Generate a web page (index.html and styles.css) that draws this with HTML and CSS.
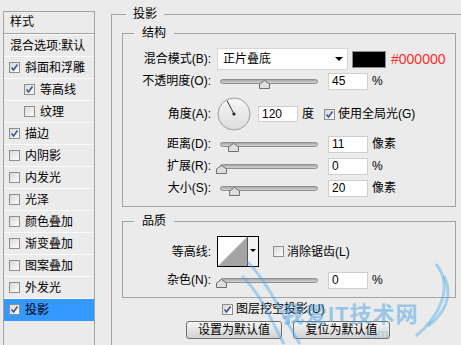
FILE: index.html
```html
<!DOCTYPE html>
<html lang="zh-CN">
<head>
  <meta charset="UTF-8">
  <title>图层样式 - 投影</title>
  <link rel="stylesheet" href="styles.css">
</head>
<body>

<div class="styles-panel">
  <div class="panel-head">样式</div>
  <div class="panel-item plain">混合选项:默认</div>
  <div class="panel-item"><span class="check"><svg width="9" height="9"><path d="M1.5 4.5 L3.5 7 L7.5 1.5" /></svg></span>斜面和浮雕</div>
  <div class="panel-item sub"><span class="check"><svg width="9" height="9"><path d="M1.5 4.5 L3.5 7 L7.5 1.5" /></svg></span>等高线</div>
  <div class="panel-item sub"><span class="check"></span>纹理</div>
  <div class="panel-item"><span class="check"><svg width="9" height="9"><path d="M1.5 4.5 L3.5 7 L7.5 1.5" /></svg></span>描边</div>
  <div class="panel-item"><span class="check"></span>内阴影</div>
  <div class="panel-item"><span class="check"></span>内发光</div>
  <div class="panel-item"><span class="check"></span>光泽</div>
  <div class="panel-item"><span class="check"></span>颜色叠加</div>
  <div class="panel-item"><span class="check"></span>渐变叠加</div>
  <div class="panel-item"><span class="check"></span>图案叠加</div>
  <div class="panel-item"><span class="check"></span>外发光</div>
  <div class="panel-item selected"><span class="check"><svg width="9" height="9"><path d="M1.5 4.5 L3.5 7 L7.5 1.5" /></svg></span>投影</div>
</div>

<fieldset class="group outer">
  <legend>投影</legend>

  <fieldset class="group structure">
    <legend>结构</legend>
    <div class="row">
      <span class="lbl">混合模式(B):</span>
      <div class="select">正片叠底<span class="caret"></span></div>
      <span class="swatch"></span>
      <span class="hex">#000000</span>
    </div>
    <div class="row">
      <span class="lbl">不透明度(O):</span>
      <div class="slider"><svg class="thumb" style="left: 45%" width="11" height="9"><polygon points="0.5,8.5 0.5,4 5.5,0.5 10.5,4 10.5,8.5" /></svg></div>
      <span class="num">45</span>
      <span class="unit">%</span>
    </div>
    <div class="row angle-row">
      <span class="lbl">角度(A):</span>
      <svg class="dial" width="34" height="34">
        <defs>
          <linearGradient id="dialFill" x1="0" y1="0" x2="0" y2="1">
            <stop offset="0" stop-color="#f6f6f6" />
            <stop offset="1" stop-color="#dcdcdc" />
          </linearGradient>
        </defs>
        <circle cx="17" cy="17" r="16" fill="url(#dialFill)" stroke="#9c9c9c" />
        <line x1="17" y1="17" x2="10" y2="3.5" stroke="#333" stroke-width="1" />
        <circle cx="17" cy="17" r="1.6" fill="#222" />
      </svg>
      <span class="num angle">120</span>
      <span class="unit">度</span>
      <span class="check global"><svg width="9" height="9"><path d="M1.5 4.5 L3.5 7 L7.5 1.5" /></svg></span>
      <span class="check-text">使用全局光(G)</span>
    </div>
    <div class="row tight">
      <span class="lbl">距离(D):</span>
      <div class="slider"><svg class="thumb" style="left: 12%" width="11" height="9"><polygon points="0.5,8.5 0.5,4 5.5,0.5 10.5,4 10.5,8.5" /></svg></div>
      <span class="num">11</span>
      <span class="unit">像素</span>
    </div>
    <div class="row">
      <span class="lbl">扩展(R):</span>
      <div class="slider"><svg class="thumb" style="left: 0%" width="11" height="9"><polygon points="0.5,8.5 0.5,4 5.5,0.5 10.5,4 10.5,8.5" /></svg></div>
      <span class="num">0</span>
      <span class="unit">%</span>
    </div>
    <div class="row">
      <span class="lbl">大小(S):</span>
      <div class="slider"><svg class="thumb" style="left: 14%" width="11" height="9"><polygon points="0.5,8.5 0.5,4 5.5,0.5 10.5,4 10.5,8.5" /></svg></div>
      <span class="num">20</span>
      <span class="unit">像素</span>
    </div>
  </fieldset>

  <fieldset class="group quality">
    <legend>品质</legend>
    <div class="row contour-row">
      <span class="lbl">等高线:</span>
      <div class="contour">
        <svg width="29" height="29"><polygon points="0,29 29,0 29,29" fill="#a4a4a4" /></svg>
        <div class="contour-drop"><span class="caret small"></span></div>
      </div>
      <span class="check aa"></span>
      <span class="check-text">消除锯齿(L)</span>
    </div>
    <div class="row tight">
      <span class="lbl">杂色(N):</span>
      <div class="slider"><svg class="thumb" style="left: 0%" width="11" height="9"><polygon points="0.5,8.5 0.5,4 5.5,0.5 10.5,4 10.5,8.5" /></svg></div>
      <span class="num">0</span>
      <span class="unit">%</span>
    </div>
  </fieldset>

  <div class="knockout"><span class="check"><svg width="9" height="9"><path d="M1.5 4.5 L3.5 7 L7.5 1.5" /></svg></span>图层挖空投影(U)</div>
  <div class="buttons">
    <button class="btn">设置为默认值</button>
    <button class="btn">复位为默认值</button>
  </div>
</fieldset>

<!-- site watermark over the dialog -->
<div class="watermark">
  <svg class="swoosh" width="220" height="90">
    <path d="M8 6 C 30 30, 40 55, 60 88" />
    <path d="M2 20 C 22 40, 30 62, 44 88" />
    <path d="M196 8 C 214 30, 200 60, 176 80" />
    <path d="M204 20 C 214 40, 204 58, 188 70" />
  </svg>
  <span class="wm-text">我爱IT技术网</span>
  <span class="wm-sub">.com</span>
</div>

</body>
</html>
```

FILE: styles.css
```css
body {
  margin: 0;
  width: 461px;
  height: 345px;
  overflow: hidden;
  position: relative;
  display: flex;
  align-items: flex-start;
  background: #ebebeb;
  font-family: "Liberation Sans", "Noto Sans CJK SC", sans-serif;
  font-size: 12px;
  line-height: 16px;
  color: #000;
}

/* left list of styles */
.styles-panel {
  flex-shrink: 0;
  margin: 11px 0 0 3px;
  width: 92px;
  height: 334px;
  box-sizing: border-box;
  border: 1px solid #a3a3a3;
  border-bottom: none;
}
.panel-head {
  height: 21px;
  line-height: 21px;
  padding-left: 6px;
  border-bottom: 1px solid #a3a3a3;
  margin-bottom: 1px;
  box-shadow: 0 1px 0 #fafafa;
}
.panel-item {
  display: flex;
  align-items: center;
  gap: 5px;
  height: 21px;
  padding-left: 5px;
  border-bottom: 1px solid #fafafa;
  white-space: nowrap;
}
.panel-item.plain {
  padding-left: 6px;
}
.panel-item.sub {
  padding-left: 20px;
}
.panel-item.selected {
  background: #3399ff;
  border-bottom-color: #3399ff;
}

.check {
  flex-shrink: 0;
  display: inline-flex;
  align-items: center;
  justify-content: center;
  width: 11px;
  height: 11px;
  box-sizing: border-box;
  border: 1px solid #8e8e8e;
  background: linear-gradient(135deg, #d8d8d8, #fdfdfd);
}
.check svg {
  display: block;
}
.check path {
  fill: none;
  stroke: #3f5199;
  stroke-width: 1.6;
}

/* right side groups */
.group {
  margin: 0;
  padding: 0;
  border: 1px solid #a3a3a3;
  box-sizing: border-box;
  min-width: 0;
}
.group > legend {
  padding: 0 8px;
  margin-left: 11px;
  line-height: 16px;
}
.outer {
  flex-shrink: 0;
  margin: 6px 0 0 16px;
  padding: 0 0 0 10px;
  width: 350px;
  height: 339px;
  border-right: none;
  border-bottom: none;
}
.outer > legend {
  padding: 0 7px;
  margin-left: 4px;
}
.structure {
  width: 334px;
  margin-top: 3px;
  padding: 7px 0 7px 0;
}
.quality {
  width: 334px;
  margin-top: 6px;
  padding: 7px 0 6px 0;
}

.row {
  display: flex;
  align-items: center;
  height: 22px;
  white-space: nowrap;
}
.row.tight {
  margin-top: 2px;
}
.angle-row {
  height: 34px;
  margin-top: 5px;
}
.contour-row {
  height: 31px;
}
.lbl {
  flex-shrink: 0;
  width: 88px;
  margin-right: 6px;
  text-align: right;
}

.select {
  display: flex;
  align-items: center;
  justify-content: space-between;
  width: 131px;
  height: 22px;
  box-sizing: border-box;
  padding: 0 4px 0 5px;
  background: #fff;
  border: 1px solid #d6d6d6;
}
.caret {
  width: 0;
  height: 0;
  border-left: 4px solid transparent;
  border-right: 4px solid transparent;
  border-top: 4px solid #000;
}
.caret.small {
  border-left-width: 3px;
  border-right-width: 3px;
  border-top-width: 3px;
}
.swatch {
  width: 34px;
  height: 17px;
  box-sizing: border-box;
  margin-left: 4px;
  background: #000;
  border: 1px solid #8c8c8c;
}
.hex {
  margin-left: 5px;
  font-size: 14px;
  color: #ff2b2b;
}

.slider {
  position: relative;
  width: 98px;
  height: 5px;
  box-sizing: border-box;
  margin-left: 3px;
  border-radius: 3px;
  border: 1px solid #8f8f8f;
  background: linear-gradient(#a6a6a6, #d4d4d4);
}
.thumb {
  position: absolute;
  top: 0;
  margin-left: -5px;
}
.thumb polygon {
  fill: #dedede;
  stroke: #6f6f6f;
  stroke-width: 1;
}

.num {
  width: 40px;
  height: 17px;
  box-sizing: border-box;
  margin-left: 10px;
  padding-left: 3px;
  line-height: 15px;
  background: #fff;
  border: 1px solid #cfcfcf;
}
.num.angle {
  margin-left: 7px;
  height: 16px;
}
.unit {
  margin-left: 4px;
}
.check.global {
  margin-left: 10px;
}
.check-text {
  margin-left: 3px;
}

.contour {
  display: flex;
  width: 42px;
  height: 31px;
  box-sizing: border-box;
  border: 1px solid #000;
  background: #fff;
}
.contour svg {
  display: block;
}
.contour-drop {
  flex: 1;
  display: flex;
  justify-content: center;
  padding-top: 12px;
  border-left: 1px solid #555;
  background: #f2f2f2;
}
.check.aa {
  margin-left: 14px;
}

.knockout {
  display: flex;
  align-items: center;
  gap: 3px;
  height: 22px;
  padding-left: 100px;
  white-space: nowrap;
}
.buttons {
  display: flex;
  gap: 11px;
  margin-top: 1px;
  padding-left: 64px;
}
.btn {
  width: 96px;
  height: 18px;
  padding: 0;
  font: inherit;
  line-height: 16px;
  color: #000;
  border: 1px solid #6f6f6f;
  border-radius: 3px;
  background: linear-gradient(#f7f7f7, #e3e3e3 50%, #d3d3d3);
}
.btn + .btn {
  width: 97px;
}

.watermark {
  position: absolute;
  left: 240px;
  top: 256px;
  width: 220px;
  height: 89px;
  overflow: hidden;
  pointer-events: none;
}
.swoosh {
  position: absolute;
  left: 0;
  top: 0;
}
.swoosh path {
  fill: none;
  stroke: rgba(80, 170, 235, 0.45);
  stroke-width: 3;
}
.wm-text {
  position: absolute;
  left: 42px;
  top: 46px;
  font-size: 22px;
  line-height: 26px;
  font-weight: bold;
  letter-spacing: 1px;
  color: rgba(70, 160, 230, 0.5);
}
.wm-sub {
  position: absolute;
  left: 120px;
  top: 70px;
  font-size: 13px;
  line-height: 16px;
  color: rgba(70, 160, 230, 0.35);
}
```
